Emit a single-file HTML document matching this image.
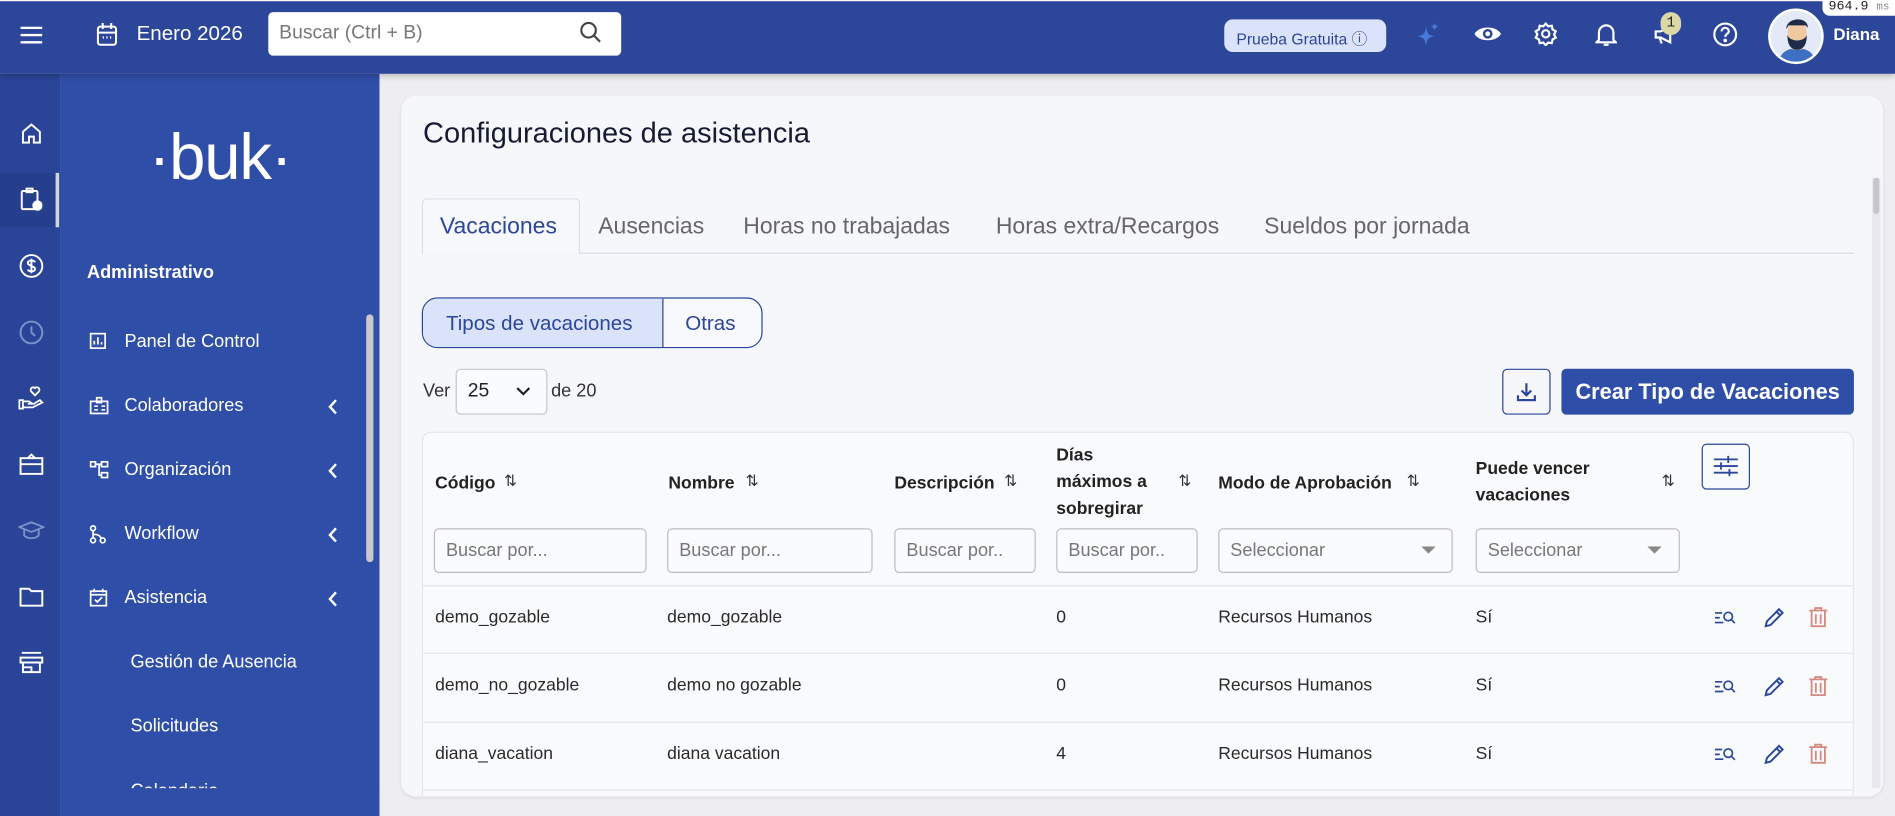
<!DOCTYPE html>
<html><head><meta charset="utf-8"><style>
*{box-sizing:border-box;margin:0;padding:0}
html,body{width:1895px;height:816px;overflow:hidden;background:#eeeef1;font-family:"Liberation Sans",sans-serif}
#w{position:absolute;left:0;top:0;width:1568px;height:675px;transform:scale(1.20855,1.2089);transform-origin:0 0;overflow:hidden;background:#eeeef1}
.a{position:absolute}
.top{left:0;top:0;width:1568px;height:61px;background:#2c4699;border-top:1px solid #fff;box-shadow:0 2px 5px rgba(0,0,0,.25);z-index:5}
.wt{color:#fff}
.rail{left:0;top:61px;width:50px;height:614px;background:#2a4597}
.side{left:50px;top:61px;width:264px;height:614px;background:#2f4ea8;overflow:hidden}
.mi{position:absolute;left:53px;color:#fff;font-size:15px}
.ic{position:absolute;left:24px}
.chev{position:absolute;left:220px;top:0}
.card{left:332px;top:79px;width:1226px;height:580px;background:#f6f7fb;border-radius:12px;box-shadow:0 1px 3px rgba(0,0,0,.08)}
.tab{position:absolute;top:177px;font-size:19px;color:#666}
.tbl{left:349px;top:357px;width:1185px;height:301px;border:1px solid #e2e4ea;border-bottom:none;border-radius:8px 8px 0 0;background:#f9fafc}
.th{position:absolute;font-size:14.5px;font-weight:bold;color:#222;line-height:22px}
.inp{position:absolute;top:437px;height:37px;border:1px solid #bdbdc3;border-radius:4px;background:#fafbfd;font-size:15px;color:#777;padding:9px 9px}
.td{position:absolute;font-size:14.5px;color:#2a2a2a}
.hr{position:absolute;left:350px;width:1183px;height:1px;background:#e3e5ea}
.srt{position:absolute;font-size:13px;color:#333}
</style></head><body><div id="w">
<div class="a top">
 <svg class="a" style="left:17px;top:21px" width="18" height="14"><path d="M0 1h18M0 7h18M0 13h18" stroke="#fff" stroke-width="2"/></svg>
 <svg class="a" style="left:80px;top:18px" width="17" height="19" fill="none" stroke="#fff" stroke-width="1.7"><rect x="1" y="3" width="15" height="15" rx="2"/><path d="M1 8h15M5 0v5M12 0v5"/><path d="M5 12h1M8 12h1M11 12h1" stroke-width="2"/></svg>
 <div class="a wt" style="left:113px;top:17px;font-size:17px">Enero 2026</div>
 <div class="a" style="left:222px;top:9px;width:292px;height:36px;background:#fff;border-radius:4px"></div>
 <div class="a" style="left:231px;top:18px;font-size:16px;color:#777">Buscar (Ctrl + B)</div>
 <svg class="a" style="left:480px;top:17px" width="18" height="18" fill="none" stroke="#444" stroke-width="1.8"><circle cx="7" cy="7" r="6"/><path d="M11.5 11.5l5 5"/></svg>
 <div class="a" style="left:1013px;top:15px;width:134px;height:27px;background:#dbe3fa;border-radius:7px;color:#2c4699;font-size:13px;padding:6px 0 0 10px">Prueba Gratuita ⓘ</div>
 <svg class="a" style="left:1171px;top:17px" width="20" height="22"><path d="M9 4C10 10 11 11 16 12C11 13 10 14 9 20C8 14 7 13 2 12C7 11 8 10 9 4Z" fill="#4a78d8"/><path d="M16 1l1 2 2 1-2 1-1 2-1-2-2-1 2-1z" fill="#4a78d8"/></svg>
 <svg class="a" style="left:1219px;top:19px" width="24" height="16"><path d="M1 8C5 1 19 1 23 8C19 15 5 15 1 8Z" fill="#fff"/><circle cx="12" cy="8" r="4" fill="#2c4699"/><circle cx="12" cy="8" r="2" fill="#fff"/></svg>
 <svg class="a" style="left:1269px;top:17px" width="20" height="20" fill="none" stroke="#fff" stroke-width="1.8"><circle cx="10" cy="10" r="3"/><path d="M10 1.5l2 2.3 3-.5.6 3 2.7 1.6-1.4 2.6 1.4 2.6-2.7 1.6-.6 3-3-.5-2 2.3-2-2.3-3 .5-.6-3-2.7-1.6 1.4-2.6-1.4-2.6 2.7-1.6.6-3 3 .5z"/></svg>
 <svg class="a" style="left:1320px;top:17px" width="18" height="21" fill="none" stroke="#fff" stroke-width="1.8"><path d="M3 15V9a6 6 0 0112 0v6l2 2H1z"/><path d="M7 19h4"/></svg>
 <svg class="a" style="left:1368px;top:19px" width="20" height="18" fill="none" stroke="#fff" stroke-width="1.8"><path d="M2 6h4l8-4v13l-8-4H2z"/><path d="M5 11l2 5"/></svg>
 <div class="a" style="left:1374px;top:9px;width:17px;height:19px;border-radius:9px;background:#ddd9a7;font-size:12px;color:#222;text-align:center;padding-top:2px;font-family:'Liberation Mono',monospace">1</div>
 <svg class="a" style="left:1417px;top:17px" width="21" height="21" fill="none" stroke="#fff" stroke-width="1.8"><circle cx="10.5" cy="10.5" r="9"/><path d="M7.5 8a3 3 0 116 0c0 2-3 2-3 4.5"/><circle cx="10.5" cy="15.5" r=".6" fill="#fff"/></svg>
 <div class="a" style="left:1463px;top:6px;width:46px;height:46px;border-radius:50%;background:#e4e9f7;border:2px solid #fff;overflow:hidden">
  <svg width="44" height="44"><path d="M6 44C8 34 14 31 22 31C30 31 36 34 38 44Z" fill="#3d6fc4"/><rect x="18" y="24" width="8" height="8" fill="#e8b98f"/><ellipse cx="22" cy="18" rx="8" ry="10" fill="#f1c9a0"/><path d="M14 20C14 30 18 32 22 32C26 32 30 30 30 20C28 26 16 26 14 20Z" fill="#1e2a4a"/><path d="M13 15C13 5 31 4 31 14L29 12L15 12Z" fill="#1e2a4a"/></svg>
 </div>
 <div class="a wt" style="left:1517px;top:19px;font-size:14px;font-weight:bold">Diana</div>
</div>
<div class="a" style="left:1508px;top:0;width:60px;height:13px;background:#fff;border-radius:0 0 0 6px;z-index:6;font-family:'Liberation Mono',monospace;font-size:11px;color:#222;padding-left:5px">964.9 <span style="color:#888;font-size:9px">ms</span></div>

<div class="a rail">
 <div class="a" style="left:0;top:82px;width:50px;height:45px;background:#263f8c"></div>
 <div class="a" style="left:46px;top:82px;width:3px;height:45px;background:#d0d4de"></div>
 <svg class="a" style="left:17px;top:40px" width="18" height="18" fill="none" stroke="#fff" stroke-width="1.6"><path d="M2 8L9 2l7 6v9H11v-5H7v5H2z"/></svg>
 <svg class="a" style="left:17px;top:94px" width="18" height="20" fill="none" stroke="#fff" stroke-width="1.6"><rect x="1" y="3" width="13" height="15" rx="1"/><rect x="5" y="1" width="5" height="3"/><circle cx="14" cy="15" r="3.5" fill="#fff"/></svg>
 <svg class="a" style="left:16px;top:149px" width="20" height="20" fill="none" stroke="#fff" stroke-width="1.6"><circle cx="10" cy="10" r="9"/><path d="M13 7c-1-2-6-2-6 0.5S13 10 13 12.5 8 15 7 13M10 4v12"/></svg>
 <svg class="a" style="left:16px;top:204px" width="20" height="20" fill="none" stroke="#7f92cc" stroke-width="1.6"><circle cx="10" cy="10" r="9"/><path d="M10 5v5l3 3"/></svg>
 <svg class="a" style="left:15px;top:257px" width="22" height="22" fill="none" stroke="#fff" stroke-width="1.5"><path d="M14 9l-3-3a2 2 0 013-3 2 2 0 013 3z"/><path d="M1 13h3v7H1zM4 14h5l3 2h-4M4 19h8l8-4-2-2-5 3"/></svg>
 <svg class="a" style="left:16px;top:314px" width="20" height="18" fill="none" stroke="#fff" stroke-width="1.6"><rect x="1" y="4" width="18" height="13"/><path d="M1 9h18M7 4l3-3 3 3"/></svg>
 <svg class="a" style="left:15px;top:370px" width="22" height="16" fill="none" stroke="#7f92cc" stroke-width="1.5"><path d="M1 5l10-4 10 4-10 4z"/><path d="M5 7v5c3 3 9 3 12 0V7"/></svg>
 <svg class="a" style="left:16px;top:424px" width="20" height="17" fill="none" stroke="#fff" stroke-width="1.6"><path d="M1 2h7l2 2h9v12H1z"/></svg>
 <svg class="a" style="left:16px;top:478px" width="20" height="18" fill="none" stroke="#fff" stroke-width="1.6"><path d="M2 1h16M1 5h18v4H1zM3 9v8h14V9M3 13h7v4"/></svg>
</div>

<div class="a side">
 <div class="a wt" style="left:73px;top:38px;font-size:54px;font-family:'Liberation Sans',sans-serif;letter-spacing:-1px">·buk·</div>
 <div class="a wt" style="left:22px;top:156px;font-size:15px;font-weight:bold">Administrativo</div>
 <svg class="ic" style="top:214px" width="14" height="14" fill="none" stroke="#fff" stroke-width="1.4"><rect x="1" y="1" width="12" height="12"/><path d="M4 10V7M7 10V4M10 10V8"/></svg>
 <div class="mi" style="top:213px">Panel de Control</div>
 <svg class="ic" style="top:267px" width="16" height="15" fill="none" stroke="#fff" stroke-width="1.4"><rect x="1" y="4" width="14" height="10"/><rect x="6" y="1" width="4" height="4"/><path d="M4 8h3M4 11h3M10 8h3M10 11h3"/></svg>
 <div class="mi" style="top:266px">Colaboradores</div>
 <svg class="a" style="left:221px;top:269px" width="8" height="13" fill="none" stroke="#fff" stroke-width="2"><path d="M7 1L2 6.5 7 12"/></svg>
 <svg class="ic" style="top:320px" width="16" height="15" fill="none" stroke="#fff" stroke-width="1.4"><rect x="1" y="1" width="4" height="4"/><rect x="10" y="1" width="5" height="4"/><rect x="10" y="10" width="5" height="4"/><path d="M5 3h5M8 3v9h2"/></svg>
 <div class="mi" style="top:319px">Organización</div>
 <svg class="a" style="left:221px;top:322px" width="8" height="13" fill="none" stroke="#fff" stroke-width="2"><path d="M7 1L2 6.5 7 12"/></svg>
 <svg class="ic" style="top:373px" width="14" height="16" fill="none" stroke="#fff" stroke-width="1.4"><circle cx="3" cy="3" r="2"/><circle cx="3" cy="13" r="2"/><circle cx="11" cy="13" r="2"/><path d="M3 5v6M3 8c4 0 6 1 7 4"/></svg>
 <div class="mi" style="top:372px">Workflow</div>
 <svg class="a" style="left:221px;top:375px" width="8" height="13" fill="none" stroke="#fff" stroke-width="2"><path d="M7 1L2 6.5 7 12"/></svg>
 <svg class="ic" style="top:425px" width="15" height="16" fill="none" stroke="#fff" stroke-width="1.4"><rect x="1" y="3" width="13" height="12"/><path d="M1 6h13M4 1v3M11 1v3M4.5 10l2 2 4-4"/></svg>
 <div class="mi" style="top:425px">Asistencia</div>
 <svg class="a" style="left:221px;top:428px" width="8" height="13" fill="none" stroke="#fff" stroke-width="2"><path d="M7 1L2 6.5 7 12"/></svg>
 <div class="mi" style="left:58px;top:478px">Gestión de Ausencia</div>
 <div class="mi" style="left:58px;top:531px">Solicitudes</div>
 <div class="mi" style="left:58px;top:585px">Calendario</div>
 <div class="a" style="left:0;top:591px;width:264px;height:30px;background:#2f4ea8"></div>
 <div class="a" style="left:253px;top:199px;width:6px;height:205px;background:#c7c9cf;border-radius:3px"></div>
</div>

<div class="a card">
 <div class="a" style="left:1217px;top:68px;width:7px;height:505px;background:#e6e8ee"></div>
 <div class="a" style="left:1218px;top:68px;width:5px;height:30px;background:#c4c6cc;border-radius:3px"></div>
</div>
<div class="a" style="left:350px;top:97px;font-size:24px;color:#161b33">Configuraciones de asistencia</div>
<div class="a" style="left:349px;top:209px;width:1185px;height:1px;background:#dcdee4"></div>
<div class="a" style="left:349px;top:164px;width:131px;height:46px;border:1px solid #dcdee4;border-bottom:none;border-radius:4px 4px 0 0;background:#f7f8fc"></div>
<div class="tab" style="left:364px;color:#2c4699">Vacaciones</div>
<div class="tab" style="left:495px">Ausencias</div>
<div class="tab" style="left:615px">Horas no trabajadas</div>
<div class="tab" style="left:824px">Horas extra/Recargos</div>
<div class="tab" style="left:1046px">Sueldos por jornada</div>

<div class="a" style="left:349px;top:246px;width:282px;height:42px;border:1px solid #2c4699;border-radius:13px;overflow:hidden;background:#f8f9fd">
 <div class="a" style="left:0;top:0;width:199px;height:42px;background:#dbe3fa;border-right:1px solid #2c4699"></div>
 <div class="a" style="left:19px;top:11px;font-size:17px;color:#2c4699">Tipos de vacaciones</div>
 <div class="a" style="left:217px;top:11px;font-size:17px;color:#2c4699">Otras</div>
</div>

<div class="a" style="left:350px;top:315px;font-size:15px;color:#333">Ver</div>
<div class="a" style="left:377px;top:305px;width:76px;height:38px;border:1px solid #c4c6cc;border-radius:4px;background:#fafbfd"></div>
<div class="a" style="left:387px;top:315px;font-size:16px;color:#222">25</div>
<svg class="a" style="left:427px;top:320px" width="12" height="8" fill="none" stroke="#222" stroke-width="1.8"><path d="M1 1l5 5 5-5"/></svg>
<div class="a" style="left:456px;top:315px;font-size:15px;color:#333">de 20</div>

<div class="a" style="left:1243px;top:305px;width:40px;height:38px;border:1px solid #2c4699;border-radius:4px"></div>
<svg class="a" style="left:1255px;top:316px" width="16" height="16" fill="none" stroke="#2c4699" stroke-width="1.8"><path d="M8 1v9M4 7l4 4 4-4M1 11v4h14v-4"/></svg>
<div class="a" style="left:1292px;top:305px;width:242px;height:38px;border-radius:4px;background:#2f4ea8;color:#fff;font-size:18px;font-weight:bold;text-align:center;padding-top:9px">Crear Tipo de Vacaciones</div>

<div class="a tbl"></div>
<div class="th" style="left:360px;top:389px">Código</div><div class="srt" style="left:417px;top:390px">⇅</div>
<div class="th" style="left:553px;top:389px">Nombre</div><div class="srt" style="left:617px;top:390px">⇅</div>
<div class="th" style="left:740px;top:389px">Descripción</div><div class="srt" style="left:831px;top:390px">⇅</div>
<div class="th" style="left:874px;top:366px">Días<br>máximos a<br>sobregirar</div><div class="srt" style="left:975px;top:390px">⇅</div>
<div class="th" style="left:1008px;top:389px">Modo de Aprobación</div><div class="srt" style="left:1164px;top:390px">⇅</div>
<div class="th" style="left:1221px;top:377px">Puede vencer<br>vacaciones</div><div class="srt" style="left:1375px;top:390px">⇅</div>
<div class="a" style="left:1408px;top:367px;width:40px;height:38px;border:1px solid #2c4699;border-radius:4px"></div>
<svg class="a" style="left:1418px;top:377px" width="20" height="17" fill="none" stroke="#2c4699" stroke-width="1.5"><path d="M0 3h20M0 8.5h20M0 14h20"/><path d="M12 0v6M6 5.5v6M13 11v6" /></svg>

<div class="inp" style="left:359px;width:176px">Buscar por...</div>
<div class="inp" style="left:552px;width:170px">Buscar por...</div>
<div class="inp" style="left:740px;width:117px">Buscar por..</div>
<div class="inp" style="left:874px;width:117px">Buscar por..</div>
<div class="inp" style="left:1008px;width:194px">Seleccionar</div>
<div class="inp" style="left:1221px;width:169px">Seleccionar</div>
<svg class="a" style="left:1176px;top:452px" width="12" height="7"><path d="M0 0h12L6 6z" fill="#888"/></svg>
<svg class="a" style="left:1363px;top:452px" width="12" height="7"><path d="M0 0h12L6 6z" fill="#888"/></svg>

<div class="hr" style="top:484px"></div>
<div class="hr" style="top:540px"></div>
<div class="hr" style="top:597px"></div>
<div class="hr" style="top:653px"></div>

<div class="td" style="left:360px;top:503px">demo_gozable</div><div class="td" style="left:552px;top:503px">demo_gozable</div><div class="td" style="left:874px;top:503px">0</div><div class="td" style="left:1008px;top:503px">Recursos Humanos</div><div class="td" style="left:1221px;top:503px">Sí</div>
<div class="td" style="left:360px;top:559px">demo_no_gozable</div><div class="td" style="left:552px;top:559px">demo no gozable</div><div class="td" style="left:874px;top:559px">0</div><div class="td" style="left:1008px;top:559px">Recursos Humanos</div><div class="td" style="left:1221px;top:559px">Sí</div>
<div class="td" style="left:360px;top:616px">diana_vacation</div><div class="td" style="left:552px;top:616px">diana vacation</div><div class="td" style="left:874px;top:616px">4</div><div class="td" style="left:1008px;top:616px">Recursos Humanos</div><div class="td" style="left:1221px;top:616px">Sí</div>

<svg width="0" height="0" style="position:absolute"><defs>
<g id="v" fill="none" stroke="#2c4699" stroke-width="1.4"><path d="M0 3h6M0 7h4M0 11h7"/><circle cx="11" cy="6" r="3.5"/><path d="M13.5 8.5l3 3"/></g>
<g id="p" fill="none" stroke="#2c4699" stroke-width="1.6"><path d="M2 16l1-4L13 2l3 3L6 15z"/><path d="M11 4l3 3"/></g>
<g id="t" fill="none" stroke="#d48a80" stroke-width="1.5"><path d="M0 3h15M5 3V1h5v2M2 3v13h11V3M5.5 6v8M9.5 6v8"/></g>
</defs></svg>
<svg class="a" style="left:1419px;top:504px" width="18" height="14"><use href="#v"/></svg>
<svg class="a" style="left:1459px;top:502px" width="18" height="18"><use href="#p"/></svg>
<svg class="a" style="left:1497px;top:502px" width="16" height="18"><use href="#t"/></svg>
<svg class="a" style="left:1419px;top:561px" width="18" height="14"><use href="#v"/></svg>
<svg class="a" style="left:1459px;top:559px" width="18" height="18"><use href="#p"/></svg>
<svg class="a" style="left:1497px;top:559px" width="16" height="18"><use href="#t"/></svg>
<svg class="a" style="left:1419px;top:617px" width="18" height="14"><use href="#v"/></svg>
<svg class="a" style="left:1459px;top:615px" width="18" height="18"><use href="#p"/></svg>
<svg class="a" style="left:1497px;top:615px" width="16" height="18"><use href="#t"/></svg>
</div></body></html>
